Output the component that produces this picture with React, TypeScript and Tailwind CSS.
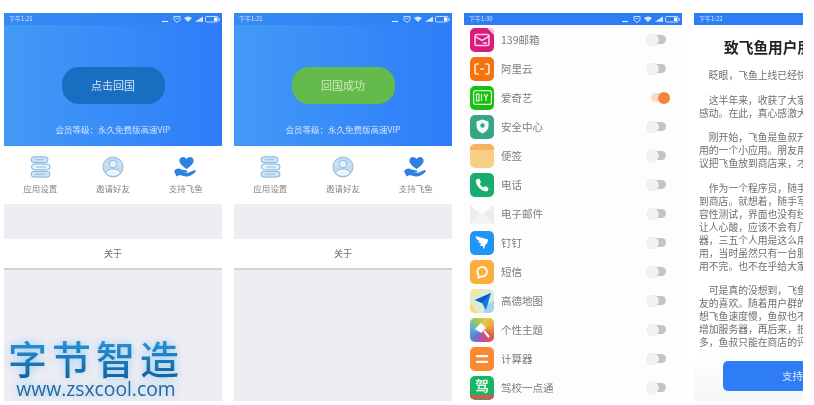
import React from "react";

const FONT = "font-['Noto_Sans_CJK_SC','Noto_Sans',sans-serif]";

function StatusIcons() {
  return (
    <svg width="58" height="8" viewBox="0 0 58 8" fill="none" stroke="#d5e6ff" strokeWidth="0.9">
      <path d="M0 6.500h6" strokeWidth="1.200" />
      <path d="M12 1.500 H18 V5 L15 7.500 L12 5Z" />
      <path d="M13.500 3.500h3" strokeWidth="0.7" />
      <path d="M22 3 Q26 0 30 3 L26 7Z" fill="#d5e6ff" stroke="none" />
      <path d="M33 6.800 L41 1.500 V6.800Z" fill="#d5e6ff" stroke="none" />
      <rect x="43.500" y="1.500" width="12.500" height="5.500" rx="1.200" />
      <rect x="52" y="2.500" width="3" height="3.500" fill="#fff" stroke="none" />
      <path d="M57.300 3.200v2.600" strokeWidth="1" />
    </svg>
  );
}

function StatusBar({ time, icons = true, solid = false }: { time: string; icons?: boolean; solid?: boolean }) {
  return (
    <div className={`h-3 shrink-0 flex items-center justify-between pl-[5px] pr-[2px] ${solid ? "bg-[#2f7df6]" : "bg-[#2f80f2]/60"}`}>
      <span className="text-[6px] leading-none text-[#d5e6ff]">{time}</span>
      {icons && <StatusIcons />}
    </div>
  );
}

function SettingsIcon() {
  return (
    <svg width="21" height="22" viewBox="0 0 21 22" fill="#cfe3f6" stroke="#7fb2dd" strokeWidth="1">
      <rect x="1" y="0.800" width="17" height="5.800" rx="2.900" />
      <rect x="1.500" y="8" width="18.500" height="5.800" rx="2.900" fill="#e6f1fb" />
      <rect x="1" y="15.300" width="19" height="5.800" rx="2.900" />
      <path d="M5 3.700h9M6 11h10M5 18.200h10" strokeWidth="0.8" />
    </svg>
  );
}

function FriendIcon() {
  return (
    <svg width="22" height="22" viewBox="0 0 22 22" fill="#c4dcf2" stroke="#8fbce0" strokeWidth="1">
      <circle cx="11" cy="11" r="10" />
      <circle cx="11" cy="8" r="3.800" fill="#e4f0fa" />
      <path d="M3.500 17.500 Q5 12.500 11 13 Q17 12.500 18.500 17.500 Q15 20.500 11 20.500 Q7 20.500 3.500 17.500Z" fill="#eef6fd" />
      <path d="M3 7 L7 10.500M19 7 L15 10.500" strokeWidth="0.8" stroke="#eef6fd" />
    </svg>
  );
}

function HeartIcon() {
  return (
    <svg width="23" height="22" viewBox="0 0 23 22">
      <path d="M12.500 13 C6 8.500 5 6 5.500 3.500 C6.800 .3 10.800 .2 12.500 3 C14.200 .2 18.200 .3 19.500 3.500 C20 6 19 8.500 12.500 13Z" fill="#2f80e2" />
      <path d="M0 15 Q3.500 11 7.500 13.500 L12.500 14.500 Q14.500 15.500 12.500 16.500 L8.500 16.500 L13.500 17 L20.500 14 Q22.800 14.500 21 16.500 Q16 21 11.500 20.500 L5.500 19 L2.500 20.500 Z" fill="#2f80e2" />
    </svg>
  );
}

function Tool({ icon, label }: { icon: React.ReactNode; label: string }) {
  return (
    <div className="flex flex-col items-center">
      <div className="h-[22px] flex items-center justify-center">{icon}</div>
      <span className="mt-[4px] text-[8.500px] leading-[12px] text-[#858585]">{label}</span>
    </div>
  );
}

function Home({ button, green, time, watermark }: { button: string; green?: boolean; time: string; watermark?: boolean }) {
  return (
    <div className="relative w-[218px] h-[388px] shrink-0 flex flex-col bg-[#eeedf2] overflow-hidden">
      <div className="h-[133px] shrink-0 flex flex-col bg-gradient-to-r from-[#439af6] to-[#2e7cf9]">
        <StatusBar time={time} />
        <div className="flex-1 flex flex-col items-center">
          <div className={`mt-[42px] w-[103px] h-[37px] rounded-[17px] flex items-center justify-center text-[11px] ${green ? "bg-[#64bb4b] text-[#cdeabb]" : "bg-[#1a6ec2] text-[#d3e6f8]"}`}>
            {button}
          </div>
          <div className="mt-[19px] text-[8.500px] leading-3 text-[#cfe3fb]">会员等级：永久免费版高速VIP</div>
        </div>
      </div>
      <div className="h-[58px] shrink-0 bg-white grid grid-cols-3 pt-[10px]">
        <Tool icon={<SettingsIcon />} label="应用设置" />
        <Tool icon={<FriendIcon />} label="邀请好友" />
        <Tool icon={<HeartIcon />} label="支持飞鱼" />
      </div>
      <div className="h-[35px] shrink-0" />
      <div className="h-[31px] shrink-0 bg-white border-b-2 border-[#d3d3d5] flex items-center justify-center text-[9px] text-[#6f6f6f]">关于</div>
      {watermark && (
        <div className="absolute left-[4px] bottom-[3px] w-[176px] flex flex-col items-center drop-shadow-[0_0_4px_rgba(130,200,245,0.9)]">
          <div className="text-[39px] leading-[43px] font-medium bg-gradient-to-b from-[#2c97dc] to-[#13639f] bg-clip-text text-transparent tracking-[5px] whitespace-nowrap">字节智造</div>
          <div className="font-['Open_Sans',sans-serif] font-medium text-[19.300px] leading-[19px] text-[#23689f] whitespace-nowrap">www.zsxcool.com</div>
        </div>
      )}
    </div>
  );
}

function Toggle({ on }: { on?: boolean }) {
  if (on) {
    return (
      <div className="relative w-[19px] h-3 ml-[4px] mr-[-4px] flex items-center">
        <div className="w-full h-[9px] rounded-full bg-[#fbd9c2]" />
        <div className="absolute right-0 size-3 rounded-full bg-[#f4843d]" />
      </div>
    );
  }
  return (
    <div className="relative w-[19px] h-3 flex items-center justify-end">
      <div className="w-[14px] h-[9px] rounded-full bg-[#c4c4c4]" />
      <div className="absolute left-0 size-3 rounded-full bg-[#f2f2f2] shadow-[0_0_1px_rgba(0,0,0,0.2)]" />
    </div>
  );
}

function AppIcon({ children, className }: { children?: React.ReactNode; className: string }) {
  return <div className={`size-6 shrink-0 rounded-[5px] flex items-center justify-center overflow-hidden ${className}`}>{children}</div>;
}

const apps: { name: string; on?: boolean; icon: React.ReactNode }[] = [
  { name: "139邮箱", icon: <AppIcon className="bg-[#d81b7c]"><svg width="24" height="24" viewBox="0 0 24 24" fill="none" stroke="#f7d3e6" strokeWidth="1.500"><rect x="5" y="6.500" width="14" height="11" rx="1.500" /><path d="M5 8.500 L12 12.500 L19 8.500M13 15h4" /><path d="M17 0 H24 V7Z" fill="#f7c6de" stroke="none" /></svg></AppIcon> },
  { name: "阿里云", icon: <AppIcon className="bg-[#f4730f]"><svg width="16" height="12" viewBox="0 0 16 12" fill="none" stroke="#fbe3cc"><path d="M5 1H3 Q1 1 1 3V9 Q1 11 3 11H5M11 1H13 Q15 1 15 3V9 Q15 11 13 11H11M6 6h4" strokeWidth="1.700" /></svg></AppIcon> },
  { name: "爱奇艺", on: true, icon: <AppIcon className="bg-[#16c00f]"><svg width="19" height="15" viewBox="0 0 19 15" fill="none" stroke="#e3f9d4" strokeWidth="1.200"><rect x="0.600" y="0.600" width="17.800" height="13.800" rx="2" /><path d="M3.500 4h2.500v7H3.500ZM8.500 4v7M11 4 L13 7.500 L15 4M13 7.500v3.500" /></svg></AppIcon> },
  { name: "安全中心", icon: <AppIcon className="bg-[#37a687]"><svg width="13" height="15" viewBox="0 0 13 15"><path d="M6.500 .5 L12.500 2.500 V7 Q12.500 12 6.500 14.500 Q.5 12 .5 7 V2.500Z" fill="#f3fbf8" /><circle cx="6.500" cy="6.500" r="2.200" fill="#37a687" /></svg></AppIcon> },
  { name: "便签", icon: <AppIcon className="bg-[#f9cf85] flex-col justify-start"><div className="w-full h-[6px] bg-[#f4b463]" /></AppIcon> },
  { name: "电话", icon: <AppIcon className="bg-[#16ad6e]"><svg width="14" height="14" viewBox="0 0 14 14"><path d="M2 1 L4.500 .8 L6 4.500 L4.500 5.800 Q6 8.500 8.500 9.500 L10 8 L13.500 10 L13 12.500 Q12 13.700 10 13.200 Q2.500 11 .8 3.500 Q.8 1.800 2 1Z" fill="#fff" /></svg></AppIcon> },
  { name: "电子邮件", icon: <svg className="shrink-0" width="24" height="24" viewBox="0 0 24 24"><path d="M0 3 L12 13 L24 3 V22 H0Z" fill="#ececec" /><path d="M0 22 L10 12 L12 13 L14 12 L24 22Z" fill="#f4f4f4" /></svg> },
  { name: "钉钉", icon: <AppIcon className="bg-[#2095f3]"><svg width="14" height="15" viewBox="0 0 14 15"><path d="M.5 1 L13 4.500 Q13 8 10 10 L10.500 10.500 L8 14.500 L8 11 L5 11 L6 8.500 L2.500 7 L5 6.500 L1.500 4Z" fill="#fff" /></svg></AppIcon> },
  { name: "短信", icon: <AppIcon className="bg-[#f9ae3d]"><svg width="14" height="14" viewBox="0 0 14 14" fill="none" stroke="#fff" strokeWidth="1.800"><path d="M3.500 12.500 L3.300 9.500 A4.800 4.800 0 1 1 7 11.500 Z" /></svg></AppIcon> },
  { name: "高德地图", icon: <AppIcon className="bg-[#dcebd2]"><svg width="24" height="24" viewBox="0 0 24 24"><path d="M0 14 L8 24 H0Z" fill="#f6dd6e" /><path d="M14 16 L24 12 V24 H14Z" fill="#a9d3f5" /><path d="M0 0 H14 L0 10Z" fill="#f2e8a6" /><path d="M21 4 L16 21 L12 14 L5 11Z" fill="#1477e6" /><path d="M21 4 L12 14 L5 11Z" fill="#0c5cc4" /></svg></AppIcon> },
  { name: "个性主题", icon: <AppIcon className="bg-[conic-gradient(from_20deg,#e9c84a,#e8a33c,#e0584c,#c0509a,#5f78d8,#5fb0dc,#9bc95a,#e9c84a)]"><svg width="18" height="18" viewBox="0 0 18 18"><path d="M2 8 L8 2 L13 7 L8 12Z" fill="#fff" /><path d="M11 10 L16 16" stroke="#fff" strokeWidth="2" /></svg></AppIcon> },
  { name: "计算器", icon: <AppIcon className="bg-[#f98a33]"><svg width="12" height="8" viewBox="0 0 12 8" fill="#fff"><rect width="12" height="2.200" rx="1" /><rect y="5.800" width="12" height="2.200" rx="1" /></svg></AppIcon> },
  { name: "驾校一点通", icon: <AppIcon className="bg-[#14b862] flex-col"><span className="text-[14px] leading-[19px] font-bold text-[#e6f8ee]">驾</span><div className="w-full h-[4px] bg-[#e05252]" /></AppIcon> },
];

function AppList() {
  return (
    <div className="w-[218px] h-[388px] shrink-0 flex flex-col bg-[#fdfdfe] overflow-hidden">
      <StatusBar time="下午1:30" solid />
      <div className="flex flex-col">
        {apps.map((a) => (
          <div key={a.name} className="h-[29px] shrink-0 flex items-center pl-[6px] pr-[16px]">
            {a.icon}
            <span className="ml-[7px] flex-1 text-[10.500px] text-[#7c7c7c]">{a.name}</span>
            <Toggle on={a.on} />
          </div>
        ))}
      </div>
    </div>
  );
}

const paragraphs = [
  ["　眨眼，飞鱼上线已经快半年了"],
  ["　这半年来，收获了大家很多", "感动。在此，真心感激大家的"],
  ["　刚开始，飞鱼是鱼叔开发自", "用的一个小应用。朋友用了", "议把飞鱼放到商店来，才有"],
  ["　作为一个程序员，随手就放", "到商店。就想着，随手写的", "容性测试，界面也没有经过", "让人心酸，应该不会有几个", "器，三五个人用是这么用的", "用，当时虽然只有一台服务", "用不完。也不在乎给大家用"],
  ["　可是真的没想到，飞鱼受到", "友的喜欢。随着用户群的增", "想飞鱼速度慢，鱼叔也不断", "增加服务器，再后来，抵挡", "多，鱼叔只能在商店的评论"],
];

function Letter() {
  return (
    <div className="w-[109px] h-[388px] shrink-0 flex flex-col bg-white overflow-hidden">
      <StatusBar time="下午1:22" icons={false} solid />
      <div className="mt-[12px] pl-[30px] text-[14.700px] leading-[20px] font-bold text-[#222] whitespace-nowrap">致飞鱼用户朋友</div>
      <div className="mt-[12px] flex flex-col gap-[11.500px] pl-[5px] text-[9.800px] leading-[13px] text-[#6e6e6e] whitespace-nowrap">
        {paragraphs.map((p, i) => (
          <div key={i}>
            {p.map((l) => (
              <div key={l}>{l}</div>
            ))}
          </div>
        ))}
      </div>
      <div className="flex-1 mt-[4px] bg-gradient-to-b from-white to-[#f6f6f6] pl-[29px] pt-[8px]">
        <div className="w-[160px] h-[30px] rounded-[5px] bg-[#2f7df5] flex items-center justify-center text-[10.500px] text-[#d7e7fe] whitespace-nowrap">支持飞鱼</div>
      </div>
    </div>
  );
}

export default function App() {
  return (
    <div className={`w-[814px] h-[405px] overflow-hidden bg-white flex gap-3 pl-[4px] pt-[13px] blur-[0.4px] ${FONT}`}>
      <Home button="点击回国" time="下午1:21" watermark />
      <Home button="回国成功" time="下午1:21" green />
      <AppList />
      <Letter />
    </div>
  );
}
